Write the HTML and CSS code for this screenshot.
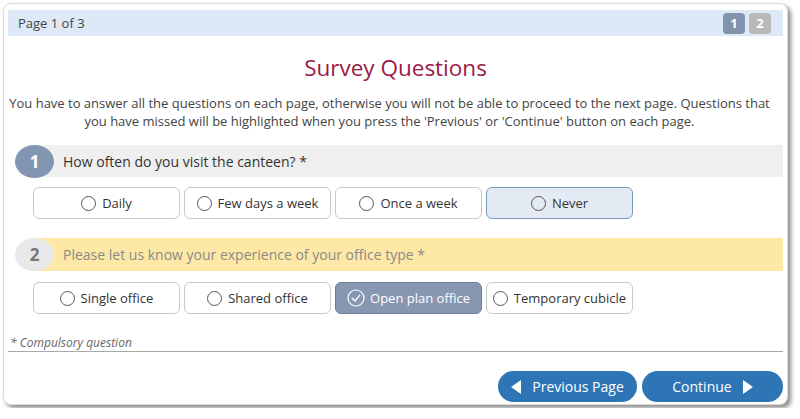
FILE: index.html
```html
<!DOCTYPE html>
<html>
<head>
<meta charset="utf-8">
<link rel="stylesheet" href="styles.css">
</head>
<body>
<div class="card">
  <div class="pagebar">
    <span class="pagelabel">Page 1 of 3</span>
    <div class="badges">
      <span class="badge current">1</span>
      <span class="badge">2</span>
    </div>
  </div>
  <h1 class="title">Survey Questions</h1>
  <p class="intro">You have to answer all the questions on each page, otherwise you will not be able to proceed to the next page. Questions that you have missed will be highlighted when you press the 'Previous' or 'Continue' button on each page.</p>

  <div class="question q-normal">
    <span class="qnum">1</span>
    <span class="qtext">How often do you visit the canteen? *</span>
  </div>
  <div class="options">
    <div class="opt"><span class="radio"></span>Daily</div>
    <div class="opt"><span class="radio"></span>Few days a week</div>
    <div class="opt"><span class="radio"></span>Once a week</div>
    <div class="opt hover"><span class="radio"></span>Never</div>
  </div>

  <div class="question q-missed">
    <span class="qnum">2</span>
    <span class="qtext">Please let us know your experience of your office type *</span>
  </div>
  <div class="options opts2">
    <div class="opt"><span class="radio"></span>Single office</div>
    <div class="opt"><span class="radio"></span>Shared office</div>
    <div class="opt selected"><svg class="check" viewBox="0 0 18 18" width="18" height="18"><circle cx="9" cy="9" r="8" fill="none" stroke="#fff" stroke-width="1.2"/><path d="M5.2 9.2 L8 12 L12.8 6.2" fill="none" stroke="#fff" stroke-width="1.3" stroke-linecap="round" stroke-linejoin="round"/></svg>Open plan office</div>
    <div class="opt"><span class="radio"></span>Temporary cubicle</div>
  </div>

  <div class="note">* Compulsory question</div>

  <div class="nav">
    <button class="navbtn"><span class="tri-left"></span>Previous Page</button>
    <button class="navbtn next">Continue<span class="tri-right"></span></button>
  </div>
</div>
</body>
</html>
```
FILE: styles.css
```css
html, body {
  margin: 0;
  padding: 0;
  background: #ffffff;
}
body {
  padding: 3px;
  font-family: "Open Sans", "Liberation Sans", sans-serif;
  color: #444;
}
.card {
  width: 775px;
  border: 1px solid #dcdcdc;
  border-radius: 8px;
  padding: 6px 4px 2px 4px;
  background: #fff;
  box-shadow: 3px 3px 4px rgba(0, 0, 0, 0.45);
}
.pagebar {
  height: 26px;
  background: #dde9f6;
  display: flex;
  align-items: center;
  justify-content: space-between;
  padding: 0 12px 0 10px;
}
.pagelabel {
  font-size: 13px;
  color: #444;
}
.badges {
  display: flex;
  gap: 4px;
}
.badge {
  width: 22px;
  height: 21px;
  border-radius: 4px;
  background: #b9b9b9;
  color: #fff;
  font-weight: bold;
  font-size: 13px;
  display: flex;
  align-items: center;
  justify-content: center;
}
.badge.current {
  background: #8193ad;
}
.title {
  margin: 16px 0 0;
  font-size: 22.5px;
  line-height: 32px;
  font-weight: normal;
  text-align: center;
  color: #9b1a46;
}
.intro {
  margin: 10px 12px 0 0;
  font-size: 13px;
  line-height: 18px;
  text-align: center;
  color: #444;
}
.question {
  margin: 15px 0 0 7px;
  height: 32px;
  display: flex;
  align-items: center;
}
.q-normal {
  background: linear-gradient(to right, transparent 20px, #efefef 20px);
}
.q-missed {
  margin-top: 19px;
  height: 33px;
  background: linear-gradient(to right, transparent 20px, #fee8a6 20px);
}
.qnum {
  width: 39px;
  height: 33px;
  border-radius: 50%;
  display: flex;
  align-items: center;
  justify-content: center;
  font-weight: bold;
  font-size: 17px;
  flex: none;
}
.q-normal .qnum {
  background: #8396b1;
  color: #fff;
}
.q-missed .qnum {
  background: #e8e8e8;
  color: #777;
}
.qtext {
  margin-left: 9px;
  font-size: 14px;
}
.q-normal .qtext {
  color: #333;
}
.q-missed .qtext {
  color: #8a8a8a;
}
.options {
  margin: 10px 0 0 25px;
  display: flex;
  gap: 4px;
}
.opts2 {
  margin-top: 11px;
}
.opt {
  box-sizing: border-box;
  width: 147px;
  height: 32px;
  border: 1px solid #c9c9c9;
  border-radius: 6px;
  display: flex;
  align-items: center;
  justify-content: center;
  font-size: 13px;
  color: #333;
  background: #fff;
}
.opt.hover {
  background: #e4eaf4;
  border-color: #7d96bb;
}
.opt.selected {
  background: #8797b1;
  border-color: #6d7d97;
  color: #fff;
}
.radio {
  box-sizing: border-box;
  width: 15px;
  height: 15px;
  border: 1px solid #555;
  border-radius: 50%;
  margin-right: 6px;
  flex: none;
}
.check {
  margin-right: 5px;
  flex: none;
}
.note {
  margin-top: 20px;
  padding-left: 2px;
  font-size: 12px;
  line-height: 17px;
  font-style: italic;
  color: #666;
  border-bottom: 1px solid #a8a8a8;
}
.nav {
  margin-top: 19px;
  display: flex;
  justify-content: flex-end;
  gap: 5px;
}
.navbtn {
  height: 31px;
  border: none;
  border-radius: 16px;
  background: #2e75b6;
  color: #fff;
  font-family: "Open Sans", "Liberation Sans", sans-serif;
  font-size: 14px;
  display: flex;
  align-items: center;
  justify-content: center;
  padding: 0;
  width: 139px;
}
.navbtn.next {
  width: 141px;
}
.tri-left {
  width: 0;
  height: 0;
  border-top: 7px solid transparent;
  border-bottom: 7px solid transparent;
  border-right: 10px solid #fff;
  margin-right: 11px;
}
.tri-right {
  width: 0;
  height: 0;
  border-top: 7px solid transparent;
  border-bottom: 7px solid transparent;
  border-left: 10px solid #fff;
  margin-left: 11px;
}
```
